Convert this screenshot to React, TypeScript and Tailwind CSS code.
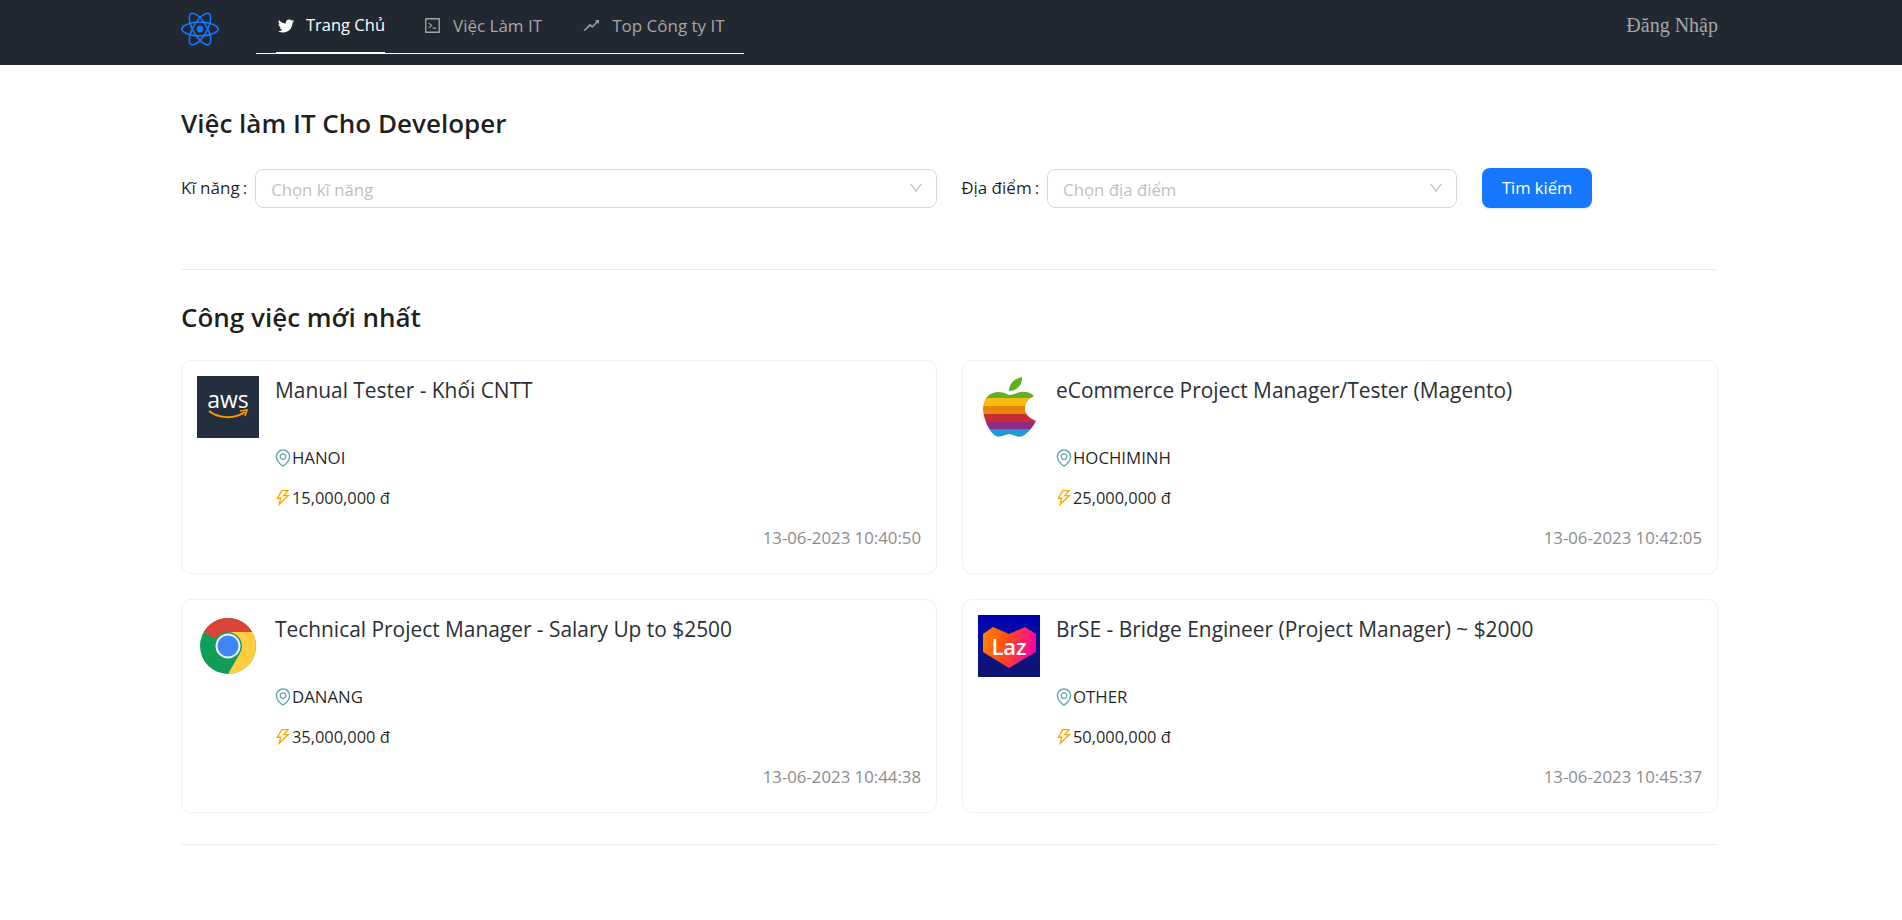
import { FaReact } from 'react-icons/fa';
import {
  AiOutlineCode,
  AiOutlineDown,
  AiOutlineEnvironment,
  AiOutlineRise,
  AiOutlineThunderbolt,
  AiOutlineTwitter,
} from 'react-icons/ai';

const AwsLogo = () => (
  <div className="w-[62px] h-[62px] bg-[#232f3e] flex flex-col items-center justify-center shrink-0">
    <span className="text-white text-[23px] leading-[20px] font-['Open_Sans',sans-serif] -mt-1">aws</span>
    <svg width="42" height="12" viewBox="0 0 42 12">
      <path d="M2 2 C12 10 28 10 38 3" fill="none" stroke="#f90" strokeWidth="2" />
      <path d="M33 2 L40 1 L38 7" fill="none" stroke="#f90" strokeWidth="1.6" />
    </svg>
  </div>
);

const AppleLogo = () => (
  <svg width="62" height="62" viewBox="0 0 62 62" className="shrink-0">
    <defs>
      <clipPath id="apple">
        <path d="M31 19 C26 16 20 15 15 17 C8 19 5 26 5 34 C6 45 12 57 18 60 C22 62 26 59 31 58 C36 59 40 62 45 60 C50 57 55 51 58 45 C51 42 47 38 47 33 C47 27 50 23 56 20 C51 15 44 15 39 17 C36 18 33 19 31 19 Z" />
      </clipPath>
    </defs>
    <path d="M31 15 C31 8 36 3 44 1 C45 8 39 15 31 15 Z" fill="#5fb11b" />
    <g clipPath="url(#apple)">
      <rect x="0" y="10" width="62" height="12" fill="#62b01d" />
      <rect x="0" y="22" width="62" height="8" fill="#f8b912" />
      <rect x="0" y="30" width="62" height="8" fill="#e8860a" />
      <rect x="0" y="38" width="62" height="8" fill="#c92c35" />
      <rect x="0" y="46" width="62" height="7" fill="#8e2b85" />
      <rect x="0" y="53" width="62" height="9" fill="#1c9bd6" />
    </g>
  </svg>
);

const ChromeLogo = () => (
  <svg width="62" height="62" viewBox="0 0 62 62" className="shrink-0">
    <circle cx="31" cy="31" r="28" fill="#0f9d58" />
    <path d="M31 3 A28 28 0 0 1 55.2 17 L31 17 A14 14 0 0 0 18.9 24 L6.8 17 A28 28 0 0 1 31 3 Z" fill="#db4437" />
    <path d="M55.2 17 A28 28 0 0 1 31 59 L43.1 38 A14 14 0 0 0 31 17 Z" fill="#ffcd40" />
    <circle cx="31" cy="31" r="12.5" fill="#f1f1f1" />
    <circle cx="31" cy="31" r="10.5" fill="#4285f4" />
  </svg>
);

const LazLogo = () => (
  <div className="w-[62px] h-[62px] shrink-0 relative bg-gradient-to-b from-[#0000b4] to-[#0f146d]">
    <svg width="62" height="62" viewBox="0 0 62 62" className="absolute inset-0">
      <defs>
        <linearGradient id="laz" x1="0" y1="0" x2="1" y2="0.2">
          <stop offset="0" stopColor="#ff8a00" />
          <stop offset="0.5" stopColor="#ff4a1c" />
          <stop offset="1" stopColor="#f40a9a" />
        </linearGradient>
      </defs>
      <path d="M5 19 L15 12 L31 19 L47 12 L58 19 L58 37 L31 53 L5 37 Z" fill="url(#laz)" />
    </svg>
    <span className="absolute left-0 right-0 top-[18px] text-center text-white font-semibold text-[22px] leading-[26px] font-['Open_Sans',sans-serif]">Laz</span>
  </div>
);

const jobs = [
  { logo: <AwsLogo />, title: 'Manual Tester - Khối CNTT', location: 'HANOI', salary: '15,000,000 đ', time: '13-06-2023 10:40:50' },
  { logo: <AppleLogo />, title: 'eCommerce Project Manager/Tester (Magento)', location: 'HOCHIMINH', salary: '25,000,000 đ', time: '13-06-2023 10:42:05' },
  { logo: <ChromeLogo />, title: 'Technical Project Manager - Salary Up to $2500', location: 'DANANG', salary: '35,000,000 đ', time: '13-06-2023 10:44:38' },
  { logo: <LazLogo />, title: 'BrSE - Bridge Engineer (Project Manager) ~ $2000', location: 'OTHER', salary: '50,000,000 đ', time: '13-06-2023 10:45:37' },
];

const JobCard = ({ job }: { job: (typeof jobs)[number] }) => (
  <div className="h-[214px] border border-[#f0f0f0] rounded-[10px] bg-white pt-[15px] px-[15px] flex flex-col">
    <div className="flex">
      {job.logo}
      <div className="ml-4 flex flex-col">
        <div className="text-[20.9px] leading-[28px] text-[#2b2f36]">{job.title}</div>
        <div className="mt-[42px] h-[24px] flex items-center text-[16.8px] text-[rgba(0,0,0,0.88)]">
          <AiOutlineEnvironment className="text-[20px] text-[#5ba8ad] -ml-[2px] -mr-[1px]" />
          <span>{job.location}</span>
        </div>
        <div className="mt-[16px] h-[24px] flex items-center text-[16.4px] text-[rgba(0,0,0,0.88)]">
          <AiOutlineThunderbolt className="text-[20px] text-[#ffa500] -ml-[2px] -mr-[1px]" />
          <span>{job.salary}</span>
        </div>
      </div>
    </div>
    <div className="mt-[16px] text-right text-[16.8px] leading-[24px] text-[#8c8c8c]">{job.time}</div>
  </div>
);

const Field = ({ label, placeholder, selectWidth }: { label: string; placeholder: string; selectWidth: string }) => (
  <div className="flex items-center">
    <label className="text-[17px] text-[rgba(0,0,0,0.88)] mr-2">
      {label}
      <span className="ml-[3px]">:</span>
    </label>
    <div className={`${selectWidth} h-[39px] border border-[#d9d9d9] rounded-lg flex items-center justify-between pl-[15px] pr-[12px] bg-white`}>
      <span className="text-[16.8px] text-[#bfbfbf] mt-[3px]">{placeholder}</span>
      <AiOutlineDown className="text-[16px] text-[#bfbfbf]" />
    </div>
  </div>
);

export default function App() {
  return (
    <div className="min-h-[920px] bg-white font-['Open_Sans',sans-serif]">
      <header className="h-[65px] bg-[#222831]">
        <div className="w-[1537px] ml-[181px] flex items-start">
          <FaReact className="text-[38px] text-[#1677ff] mt-[10px] shrink-0" />
          <nav className="ml-[37px] w-[488px] h-[54px] border-b border-white flex">
            <a className="relative shrink-0 whitespace-nowrap h-[51px] pl-5 pr-[18px] flex items-center gap-[10px] text-white text-[16.5px]">
              <AiOutlineTwitter className="text-[20px]" />
              Trang Chủ
              <span className="absolute left-5 right-[18px] bottom-[-3px] h-[2px] bg-white" />
            </a>
            <a className="shrink-0 whitespace-nowrap h-[51px] px-5 flex items-center gap-[11px] text-[#a6a6a6] text-[17px]">
              <AiOutlineCode className="text-[19px]" />
              Việc Làm IT
            </a>
            <a className="shrink-0 whitespace-nowrap h-[51px] px-5 flex items-center gap-[11px] text-[#a6a6a6] text-[17px]">
              <AiOutlineRise className="text-[19px]" />
              Top Công ty IT
            </a>
          </nav>
          <span className="ml-auto mt-[10px] font-['Liberation_Serif',serif] text-[20px] text-[#a6a6a6]">Đăng Nhập</span>
        </div>
      </header>
      <main className="w-[1537px] ml-[181px]">
        <h2 className="mt-[39px] text-[26px] leading-[38px] font-semibold text-[rgba(0,0,0,0.88)]">Việc làm IT Cho Developer</h2>
        <div className="mt-[26px] flex items-center">
          <Field label="Kĩ năng" placeholder="Chọn kĩ năng" selectWidth="w-[682px]" />
          <div className="ml-[24px]">
            <Field label="Địa điểm" placeholder="Chọn địa điểm" selectWidth="w-[410px]" />
          </div>
          <button className="ml-[25px] w-[110px] h-[40px] rounded-lg bg-[#1677ff] text-white text-[16.5px] shadow-[0_2px_0_rgba(5,145,255,0.1)]">Tìm kiếm</button>
        </div>
        <div className="mt-[61px] border-t border-[#ececec]" />
        <h2 className="mt-[28px] text-[26px] leading-[38px] font-semibold text-[rgba(0,0,0,0.88)]">Công việc mới nhất</h2>
        <div className="mt-[24px] grid grid-cols-2 gap-x-[25px] gap-y-[25px]">
          {jobs.map((job) => (
            <JobCard key={job.title} job={job} />
          ))}
        </div>
        <div className="mt-[31px] border-t border-[#ececec]" />
      </main>
    </div>
  );
}
